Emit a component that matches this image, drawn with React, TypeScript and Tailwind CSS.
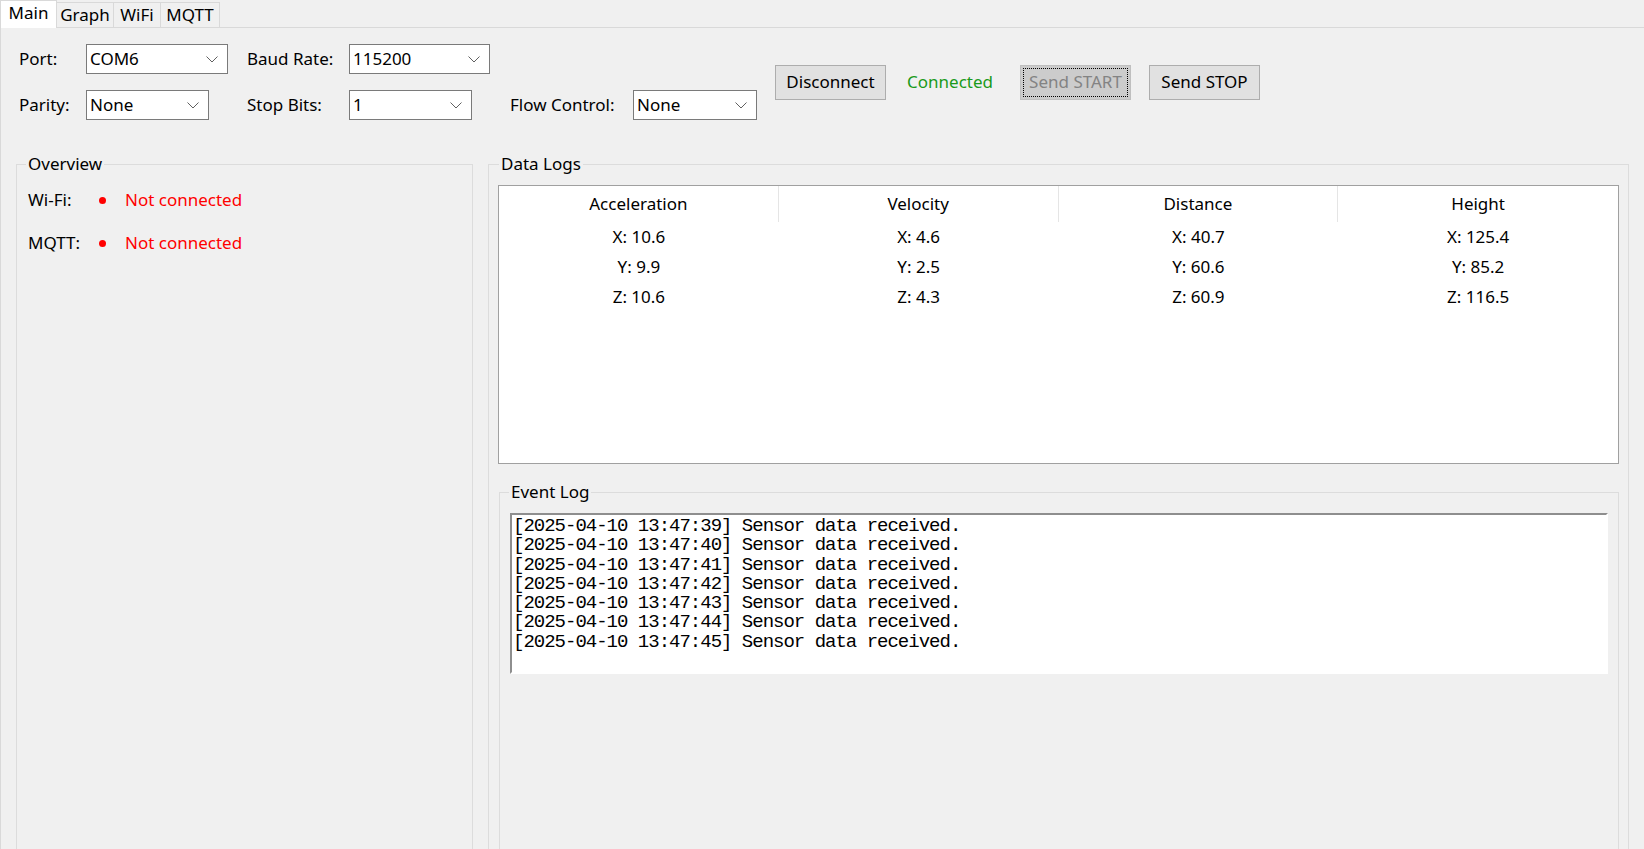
import React from 'react';

const tabs = [
    { name: 'Main', w: 'w-[57px]' },
    { name: 'Graph', w: 'w-[57px]' },
    { name: 'WiFi', w: 'w-[47px]' },
    { name: 'MQTT', w: 'w-[59px]' },
];

const columns = [
    { title: 'Acceleration', x: '10.6', y: '9.9', z: '10.6' },
    { title: 'Velocity', x: '4.6', y: '2.5', z: '4.3' },
    { title: 'Distance', x: '40.7', y: '60.6', z: '60.9' },
    { title: 'Height', x: '125.4', y: '85.2', z: '116.5' },
];

const events = ['39', '40', '41', '42', '43', '44', '45'].map(
    (s) => `[2025-04-10 13:47:${s}] Sensor data received.`
);

function Combo({ value, width }: { value: string; width: string }) {
    return (
        <div className={`${width} h-[30px] bg-white border border-[#7a7a7a] flex items-center justify-between pl-[3px] pr-[9px]`}>
            <span className="leading-[22px]">{value}</span>
            <svg width="12" height="7" viewBox="0 0 12 7">
                <path d="M0.5 0.5 L6 6 L11.5 0.5" stroke="#606060" strokeWidth="1" fill="none" />
            </svg>
        </div>
    );
}

function Button({ children, disabled }: { children: React.ReactNode; disabled?: boolean }) {
    return (
        <div
            className={
                disabled
                    ? 'w-[111px] h-[35px] flex items-center justify-center bg-[#cccccc] border border-[#bfbfbf] text-[#838383] outline-1 outline-dotted outline-black -outline-offset-4'
                    : 'w-[111px] h-[35px] flex items-center justify-center bg-[#e1e1e1] border border-[#adadad] text-black'
            }
        >
            {children}
        </div>
    );
}

export default function App() {
    return (
        <div
            className="w-[1644px] h-[849px] overflow-hidden bg-[#f0f0f0] text-black text-[17px] leading-[22px]"
            style={{ fontFamily: '"Noto Sans", "Liberation Sans", sans-serif' }}
        >
            {/* Tab strip */}
            <div className="h-[28px] border-b border-[#d9d9d9] flex items-end">
                {tabs.map((t, i) =>
                    i === 0 ? (
                        <div
                            key={t.name}
                            className={`${t.w} relative h-[28px] -mb-px bg-white border-l border-t border-r border-[#d9d9d9] flex items-center justify-center pb-[3px]`}
                        >
                            {t.name}
                        </div>
                    ) : (
                        <div
                            key={t.name}
                            className={`${t.w} h-[25px] bg-[#f0f0f0] border-t border-r border-[#d9d9d9] flex items-center justify-center`}
                        >
                            {t.name}
                        </div>
                    )
                )}
            </div>

            {/* Tab page */}
            <div className="border-l border-[#d9d9d9] h-[821px]">
                {/* Serial settings */}
                <div className="flex items-center pt-[16px] pl-[18px]">
                    <div className="grid grid-cols-[67px_161px_102px_161px_123px_124px] grid-rows-[30px_30px] gap-y-[16px] items-center">
                        <span>Port:</span>
                        <Combo value="COM6" width="w-[142px]" />
                        <span>Baud Rate:</span>
                        <Combo value="115200" width="w-[141px]" />
                        <div />
                        <div />
                        <span>Parity:</span>
                        <Combo value="None" width="w-[123px]" />
                        <span>Stop Bits:</span>
                        <Combo value="1" width="w-[123px]" />
                        <span>Flow Control:</span>
                        <Combo value="None" width="w-[124px]" />
                    </div>
                    <div className="flex items-center ml-[18px]">
                        <Button>Disconnect</Button>
                        <span className="ml-[21px] text-[#1a9a1a]">Connected</span>
                        <div className="ml-[27px]">
                            <Button disabled>Send START</Button>
                        </div>
                        <div className="ml-[18px]">
                            <Button>Send STOP</Button>
                        </div>
                    </div>
                </div>

                {/* Groups */}
                <div className="flex items-start mt-[33px] ml-[15px] gap-[15px]">
                    {/* Overview */}
                    <fieldset className="w-[457px] h-[720px] border border-[#dcdcdc]">
                        <legend className="ml-[9px] px-[2px] leading-[22px]">Overview</legend>
                        <div className="pl-[11px] mt-[14px] flex items-center">
                            <span className="w-[71px]">Wi-Fi:</span>
                            <span className="w-[7px] h-[7px] rounded-full bg-[#ff0000]" />
                            <span className="ml-[19px] text-[#ff0000]">Not connected</span>
                        </div>
                        <div className="pl-[11px] mt-[21px] flex items-center">
                            <span className="w-[71px]">MQTT:</span>
                            <span className="w-[7px] h-[7px] rounded-full bg-[#ff0000]" />
                            <span className="ml-[19px] text-[#ff0000]">Not connected</span>
                        </div>
                    </fieldset>

                    {/* Data Logs */}
                    <fieldset className="w-[1141px] h-[720px] border border-[#dcdcdc]">
                        <legend className="ml-[10px] px-[2px] leading-[22px]">Data Logs</legend>
                        <div className="ml-[9px] mt-[10px] w-[1121px] h-[279px] bg-white border border-[#a0a0a0]">
                            <div className="grid grid-cols-4">
                                {columns.map((c, i) => (
                                    <div key={c.title} className="flex flex-col items-center">
                                        <div
                                            className={`w-full h-[36px] flex items-center justify-center ${
                                                i < 3 ? 'border-r border-[#e5e5e5]' : ''
                                            }`}
                                        >
                                            {c.title}
                                        </div>
                                        <div className="h-[30px] flex items-center">X: {c.x}</div>
                                        <div className="h-[30px] flex items-center">Y: {c.y}</div>
                                        <div className="h-[30px] flex items-center">Z: {c.z}</div>
                                    </div>
                                ))}
                            </div>
                        </div>

                        {/* Event Log */}
                        <fieldset className="ml-[10px] mt-[17px] w-[1120px] h-[500px] border border-[#dcdcdc]">
                            <legend className="ml-[9px] px-[2px] leading-[22px]">Event Log</legend>
                            <div className="ml-[10px] mt-[10px] w-[1098px] h-[161px] bg-white border-2 border-t-[#8e8e8e] border-l-[#8e8e8e] border-r-white border-b-white pt-[2px] pl-[1px]">
                                {events.map((e) => (
                                    <div
                                        key={e}
                                        className="text-[19px] leading-[19.3px] tracking-[-1px] whitespace-pre"
                                        style={{ fontFamily: '"Liberation Mono", "DejaVu Sans Mono", monospace' }}
                                    >
                                        {e}
                                    </div>
                                ))}
                            </div>
                        </fieldset>
                    </fieldset>
                </div>
            </div>
        </div>
    );
}
